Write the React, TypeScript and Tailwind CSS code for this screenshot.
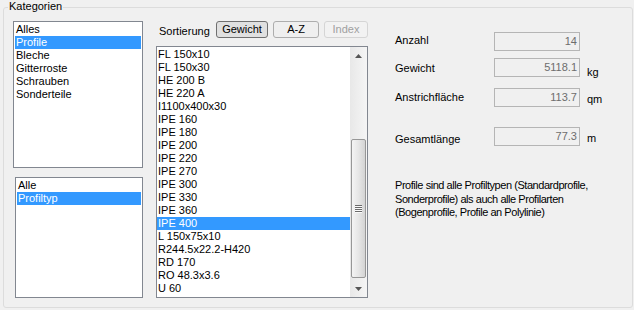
import React from 'react';

const CATEGORIES = ['Alles', 'Profile', 'Bleche', 'Gitterroste', 'Schrauben', 'Sonderteile'];
const FILTERS = ['Alle', 'Profiltyp'];
const PROFILES = [
  'FL 150x10', 'FL 150x30', 'HE 200 B', 'HE 220 A', 'I1100x400x30', 'IPE 160', 'IPE 180',
  'IPE 200', 'IPE 220', 'IPE 270', 'IPE 300', 'IPE 330', 'IPE 360', 'IPE 400', 'L 150x75x10',
  'R244.5x22.2-H420', 'RD 170', 'RO 48.3x3.6', 'U 60',
];

function ListItem({ text, selected }: { text: string; selected?: boolean }) {
  return (
    <div className={`h-[13px] pl-[1px] leading-[13px] whitespace-nowrap ${selected ? 'bg-[#3399ff] text-white' : 'text-black'}`}>
      {text}
    </div>
  );
}

function ReadOnlyRow({
  label, value, unit, labelOffset, unitOffset, className,
}: { label: string; value: string; unit?: string; labelOffset: string; unitOffset?: string; className: string }) {
  return (
    <div className={`flex items-start ${className}`}>
      <div className={`w-[99px] leading-[13px] ${labelOffset}`}>{label}</div>
      <div className="w-[86px] h-[19px] border border-[#b5b5b5] bg-[#f0f0f0] flex items-center justify-end pr-[2px] text-[#6d6d6d]">
        {value}
      </div>
      {unit && <div className={`ml-[7px] leading-[13px] ${unitOffset}`}>{unit}</div>}
    </div>
  );
}

function Scrollbar() {
  return (
    <div className="w-[17px] flex flex-col bg-linear-to-r from-[#e8e8e8] to-[#f5f5f5]">
      {/* up arrow */}
      <div className="h-[17px] flex items-center justify-center">
        <svg width="7" height="4" viewBox="0 0 7 4"><path d="M3.5 0 L7 4 L0 4 Z" fill="#555" /></svg>
      </div>
      <div className="flex-1">
        <div className="mt-[75px] ml-[1px] w-[15px] h-[139px] rounded-[2px] border border-[#979797] bg-linear-to-r from-[#f4f4f4] via-[#e6e6e6] to-[#d4d4d4] flex items-center justify-center">
          <svg width="7" height="8" viewBox="0 0 7 8">
            <path d="M0 0.5 H7 M0 2.5 H7 M0 4.5 H7 M0 6.5 H7" stroke="#6a6a6a" strokeWidth="1" />
            <path d="M0 1.5 H7 M0 3.5 H7 M0 5.5 H7 M0 7.5 H7" stroke="#fafafa" strokeWidth="1" />
          </svg>
        </div>
      </div>
      {/* down arrow */}
      <div className="h-[17px] flex items-center justify-center">
        <svg width="7" height="4" viewBox="0 0 7 4"><path d="M0 0 L7 0 L3.5 4 Z" fill="#555" /></svg>
      </div>
    </div>
  );
}

export default function App() {
  return (
    <div className="w-[634px] h-[310px] bg-[#f0f0f0] pt-[7px] pl-[3px] font-['Liberation_Sans',Arial,sans-serif] text-[11px] leading-[13px] text-black overflow-hidden">
      {/* Group box */}
      <div className="relative w-[630px] h-[301px] border border-[#dcdcdc] rounded-[3px] pt-[13px] pl-[9px] flex">
        <div className="absolute -top-[8px] left-[4px] px-[1px] bg-[#f0f0f0] leading-[13px]">Kategorien</div>

        {/* Left column */}
        <div className="w-[130px] flex flex-col">
          <div className="w-[130px] h-[147px] border border-[#828790] bg-white pt-[1px] px-[1px]">
            {CATEGORIES.map(c => <ListItem key={c} text={c} selected={c === 'Profile'} />)}
          </div>
          <div className="ml-[2px] mt-[9px] w-[128px] h-[121px] border border-[#828790] bg-white pt-[1px] px-[1px]">
            {FILTERS.map(f => <ListItem key={f} text={f} selected={f === 'Profiltyp'} />)}
          </div>
        </div>

        {/* Middle column */}
        <div className="ml-[13px] w-[212px] flex flex-col">
          <div className="h-[17px] flex items-end pl-[3px]">
            <div className="w-[57px] leading-[13px]">Sortierung</div>
            <button className="w-[52px] h-[17px] rounded-[3px] border border-[#707070] bg-[#e0e0e0] leading-[13px]">Gewicht</button>
            <button className="ml-[5px] w-[46px] h-[17px] rounded-[3px] border border-[#adadad] bg-[#efefef] leading-[13px]">A-Z</button>
            <button className="ml-[5px] w-[44px] h-[17px] rounded-[3px] border border-[#d5d5d5] bg-[#f2f2f2] text-[#a0a0a0] leading-[13px]">Index</button>
          </div>
          <div className="mt-[8px] w-[212px] h-[252px] border border-[#828790] bg-white flex">
            <div className="flex-1 pt-[1px] overflow-hidden">
              {PROFILES.map(p => <ListItem key={p} text={p} selected={p === 'IPE 400'} />)}
            </div>
            <Scrollbar />
          </div>
        </div>

        {/* Right column */}
        <div className="pl-[27px] pt-[11px] flex flex-col">
          <ReadOnlyRow label="Anzahl" value="14" labelOffset="mt-[2px]" className="" />
          <ReadOnlyRow label="Gewicht" value="5118.1" unit="kg" labelOffset="mt-[4px]" unitOffset="mt-[8px]" className="mt-[7px]" />
          <ReadOnlyRow label="Anstrichfläche" value="113.7" unit="qm" labelOffset="mt-[3px]" unitOffset="mt-[5px]" className="mt-[9px]" />
          <ReadOnlyRow label="Gesamtlänge" value="77.3" unit="m" labelOffset="mt-[6px]" unitOffset="mt-[5px]" className="mt-[20px]" />
          <p className="mt-[33px] leading-[13.5px] tracking-[-0.45px] whitespace-nowrap">
            Profile sind alle Profiltypen (Standardprofile,<br />
            Sonderprofile) als auch alle Profilarten<br />
            (Bogenprofile, Profile an Polylinie)
          </p>
        </div>
      </div>
    </div>
  );
}
